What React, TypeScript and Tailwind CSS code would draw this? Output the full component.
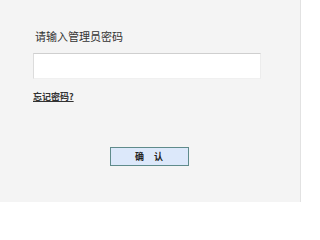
export default function App() {
  return (
    <div
      className="w-[301px] h-[202px] bg-[#f4f4f4] border-r border-[#e2e2e2] flex flex-col"
      style={{ fontFamily: '"Noto Sans CJK SC", "Liberation Sans", sans-serif' }}
    >
      <div className="pl-[35px] pt-[29px] text-[11px] leading-[14px] text-[#333]">请输入管理员密码</div>
      <input
        type="password"
        className="ml-[33px] mt-[10px] w-[228px] h-[26px] bg-white border border-t-[#cfcfcf] border-l-[#dcdcdc] border-r-[#ececec] border-b-[#f0f0f0] outline-none"
      />
      <a
        href="#"
        className="ml-[33px] mt-[12px] w-fit text-[9px] leading-[12px] font-bold text-[#333] underline underline-offset-1"
      >
        忘记密码?
      </a>
      <div className="flex justify-center pl-[0px] mt-[44px]">
        <button className="ml-[-2px] w-[79px] h-[19px] bg-[#dce8fa] border border-[#5f8b8b] text-[9px] font-bold text-[#222] tracking-[4px] pl-[4px]">
          确 认
        </button>
      </div>
    </div>
  );
}
